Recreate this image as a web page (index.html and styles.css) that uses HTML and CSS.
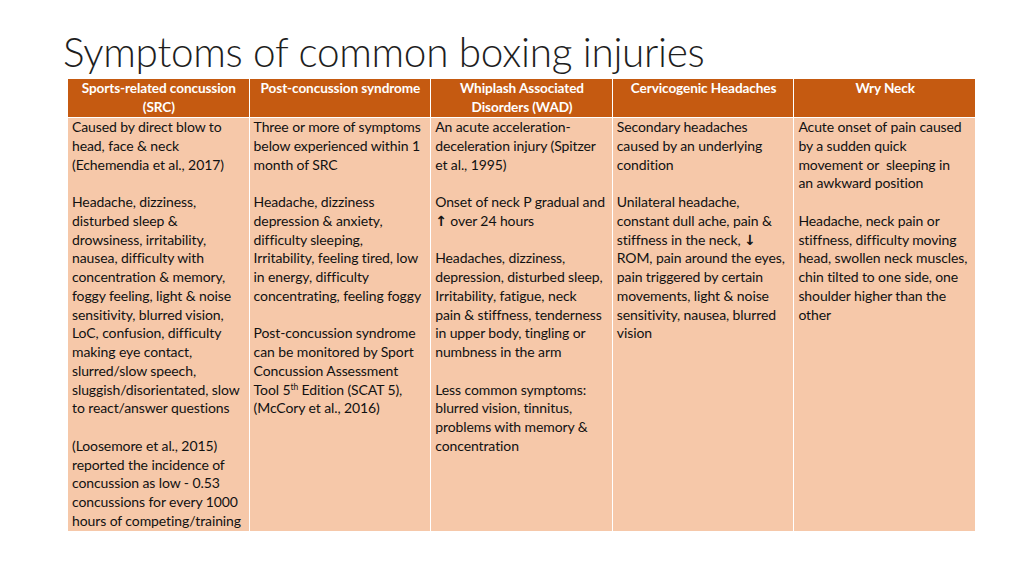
FILE: index.html
```html
<!DOCTYPE html>
<html lang="en">
<head>
<meta charset="utf-8">
<title>Symptoms of common boxing injuries</title>
<link rel="stylesheet" href="styles.css">
</head>
<body>
<div class="slide">
  <h1 class="title">Symptoms of common boxing injuries</h1>
  <table class="grid">
    <colgroup>
      <col class="c"><col class="c"><col class="c"><col class="c"><col class="c">
    </colgroup>
    <thead>
      <tr>
        <th>Sports-related concussion<br>(SRC)</th>
        <th>Post-concussion syndrome</th>
        <th>Whiplash Associated<br>Disorders (WAD)</th>
        <th>Cervicogenic Headaches</th>
        <th>Wry Neck</th>
      </tr>
    </thead>
    <tbody>
      <tr>
        <td>Caused by direct blow to<br>head, face &amp; neck<br>(Echemendia et al., 2017)<br><br>Headache, dizziness,<br>disturbed sleep &amp;<br>drowsiness, irritability,<br>nausea, difficulty with<br>concentration &amp; memory,<br>foggy feeling, light &amp; noise<br>sensitivity, blurred vision,<br>LoC, confusion, difficulty<br>making eye contact,<br>slurred/slow speech,<br>sluggish/disorientated, slow<br>to react/answer questions<br><br>(Loosemore et al., 2015)<br>reported the incidence of<br>concussion as low - 0.53<br>concussions for every 1000<br>hours of competing/training</td>
        <td>Three or more of symptoms<br>below experienced within 1<br>month of SRC<br><br>Headache, dizziness<br>depression &amp; anxiety,<br>difficulty sleeping,<br>Irritability, feeling tired, low<br>in energy, difficulty<br>concentrating, feeling foggy<br><br>Post-concussion syndrome<br>can be monitored by Sport<br>Concussion Assessment<br>Tool 5<sup>th</sup> Edition (SCAT 5),<br>(McCory et al., 2016)</td>
        <td>An acute acceleration-<br>deceleration injury (Spitzer<br>et al., 1995)<br><br>Onset of neck P gradual and<br><span class="arrow">↑</span> over 24 hours<br><br>Headaches, dizziness,<br>depression, disturbed sleep,<br>Irritability, fatigue, neck<br>pain &amp; stiffness, tenderness<br>in upper body, tingling or<br>numbness in the arm<br><br>Less common symptoms:<br>blurred vision, tinnitus,<br>problems with memory &amp;<br>concentration</td>
        <td>Secondary headaches<br>caused by an underlying<br>condition<br><br>Unilateral headache,<br>constant dull ache, pain &amp;<br>stiffness in the neck, <span class="arrow">↓</span><br>ROM, pain around the eyes,<br>pain triggered by certain<br>movements, light &amp; noise<br>sensitivity, nausea, blurred<br>vision</td>
        <td>Acute onset of pain caused<br>by a sudden quick<br>movement or&nbsp; sleeping in<br>an awkward position<br><br>Headache, neck pain or<br>stiffness, difficulty moving<br>head, swollen neck muscles,<br>chin tilted to one side, one<br>shoulder higher than the<br>other</td>
      </tr>
    </tbody>
  </table>
</div>
</body>
</html>
```

FILE: styles.css
```css
html, body {
  margin: 0;
  padding: 0;
  background: #ffffff;
}

.slide {
  width: 1024px;
  height: 576px;
  background: #ffffff;
  padding: 27px 0 0 67px;
  box-sizing: border-box;
  font-family: Lato, "Open Sans", "DejaVu Sans", sans-serif;
}

.title {
  margin: 0 0 0 -4px;
  font-family: Lato, "Open Sans", sans-serif;
  font-weight: 300;
  font-size: 40.5px;
  line-height: 50px;
  color: #1e1e1e;
  letter-spacing: -0.3px;
  height: 51px;
}

.grid {
  border-collapse: collapse;
  table-layout: fixed;
  width: 909px;
}

.grid .c {
  width: 20%;
}

.grid th,
.grid td {
  border: 1px solid #ffffff;
  padding: 0 3px 0 4px;
  vertical-align: top;
  white-space: nowrap;
  overflow: hidden;
}

.grid th {
  background: #c55a11;
  color: #ffffff;
  font-weight: 700;
  font-size: 13.6px;
  line-height: 19px;
  text-align: center;
  height: 37px;
  letter-spacing: -0.1px;
}

.grid td {
  background: #f6c8a9;
  color: #111111;
  font-size: 14px;
  line-height: 18.75px;
  height: 410px;
  letter-spacing: -0.1px;
}

.grid sup {
  font-size: 8.5px;
  line-height: 0;
  vertical-align: 5px;
}

.arrow {
  font-family: "DejaVu Sans", sans-serif;
  font-size: 14px;
  font-weight: 700;
}
```
